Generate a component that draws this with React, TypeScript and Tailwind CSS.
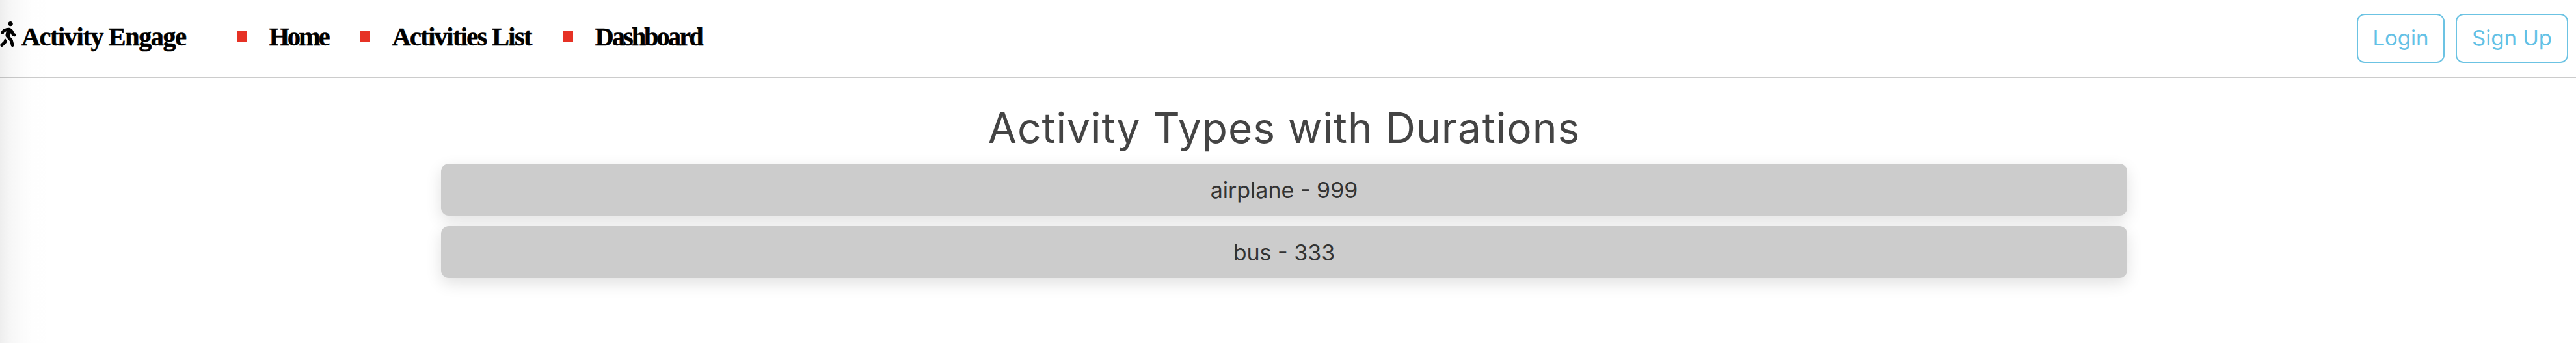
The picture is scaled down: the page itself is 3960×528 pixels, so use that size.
import { FaWalking } from "react-icons/fa";

const links = [
  { label: "Home", track: "tracking-[-2.8px]" },
  { label: "Activities List", track: "tracking-[-1.5px]" },
  { label: "Dashboard", track: "tracking-[-2.8px]" },
];
const rows = ["airplane - 999", "bus - 333"];
const sans = "font-['Inter','Liberation_Sans',sans-serif]";
const serif = "font-['Liberation_Serif',serif] text-[40px] font-bold tracking-[-1.3px] text-black [-webkit-text-stroke:0.6px_black]";

export default function App() {
  return (
    <div className="relative h-[528px] w-full overflow-hidden bg-white">
      <nav className="flex h-[120px] items-center border-b-2 border-[#cccccc] pr-3">
        <a className={`flex items-center ${serif}`}>
          <FaWalking className="mt-[-13px] mr-[8px] h-[39px] w-[25px] shrink-0" />
          <span className="mt-[-4px]">Activity Engage</span>
        </a>
        <ul className={`ml-[78px] flex items-center gap-[48px] ${serif}`}>
          {links.map((l) => (
            <li key={l.label} className="flex items-center gap-[34px]">
              <span className="mt-[-6px] h-4 w-4 bg-[#e63225]" />
              <span className={`mt-[-4px] ${l.track}`}>{l.label}</span>
            </li>
          ))}
        </ul>
        <div className={`ml-auto flex gap-[17px] text-[33px] text-[#62c1e6] ${sans}`}>
          <button className="h-[76px] w-[135px] rounded-xl border-2 border-[#6cc3e3]">Login</button>
          <button className="h-[76px] w-[173px] rounded-xl border-2 border-[#6cc3e3]">Sign Up</button>
        </div>
      </nav>
      <main className={`flex flex-col items-center pr-3 ${sans}`}>
        <h1 className="mt-[32px] h-[100px] text-[64px] leading-[90px] font-normal tracking-[1px] text-[#444444]">Activity Types with Durations</h1>
        <div className="flex w-[2592px] flex-col gap-4">
          {rows.map((r) => (
            <div key={r} className="flex h-20 items-center justify-center rounded-xl bg-[#cccccc] text-[34px] text-[#333333] shadow-[0_8px_24px_rgba(0,0,0,0.12)]">
              {r}
            </div>
          ))}
        </div>
      </main>
      <div className="pointer-events-none absolute inset-y-0 left-0 w-[90px] bg-[linear-gradient(to_right,rgba(0,0,0,0.065),rgba(0,0,0,0.035)_15px,rgba(0,0,0,0.015)_33px,rgba(0,0,0,0.005)_50px,transparent_90px)]" />
    </div>
  );
}
